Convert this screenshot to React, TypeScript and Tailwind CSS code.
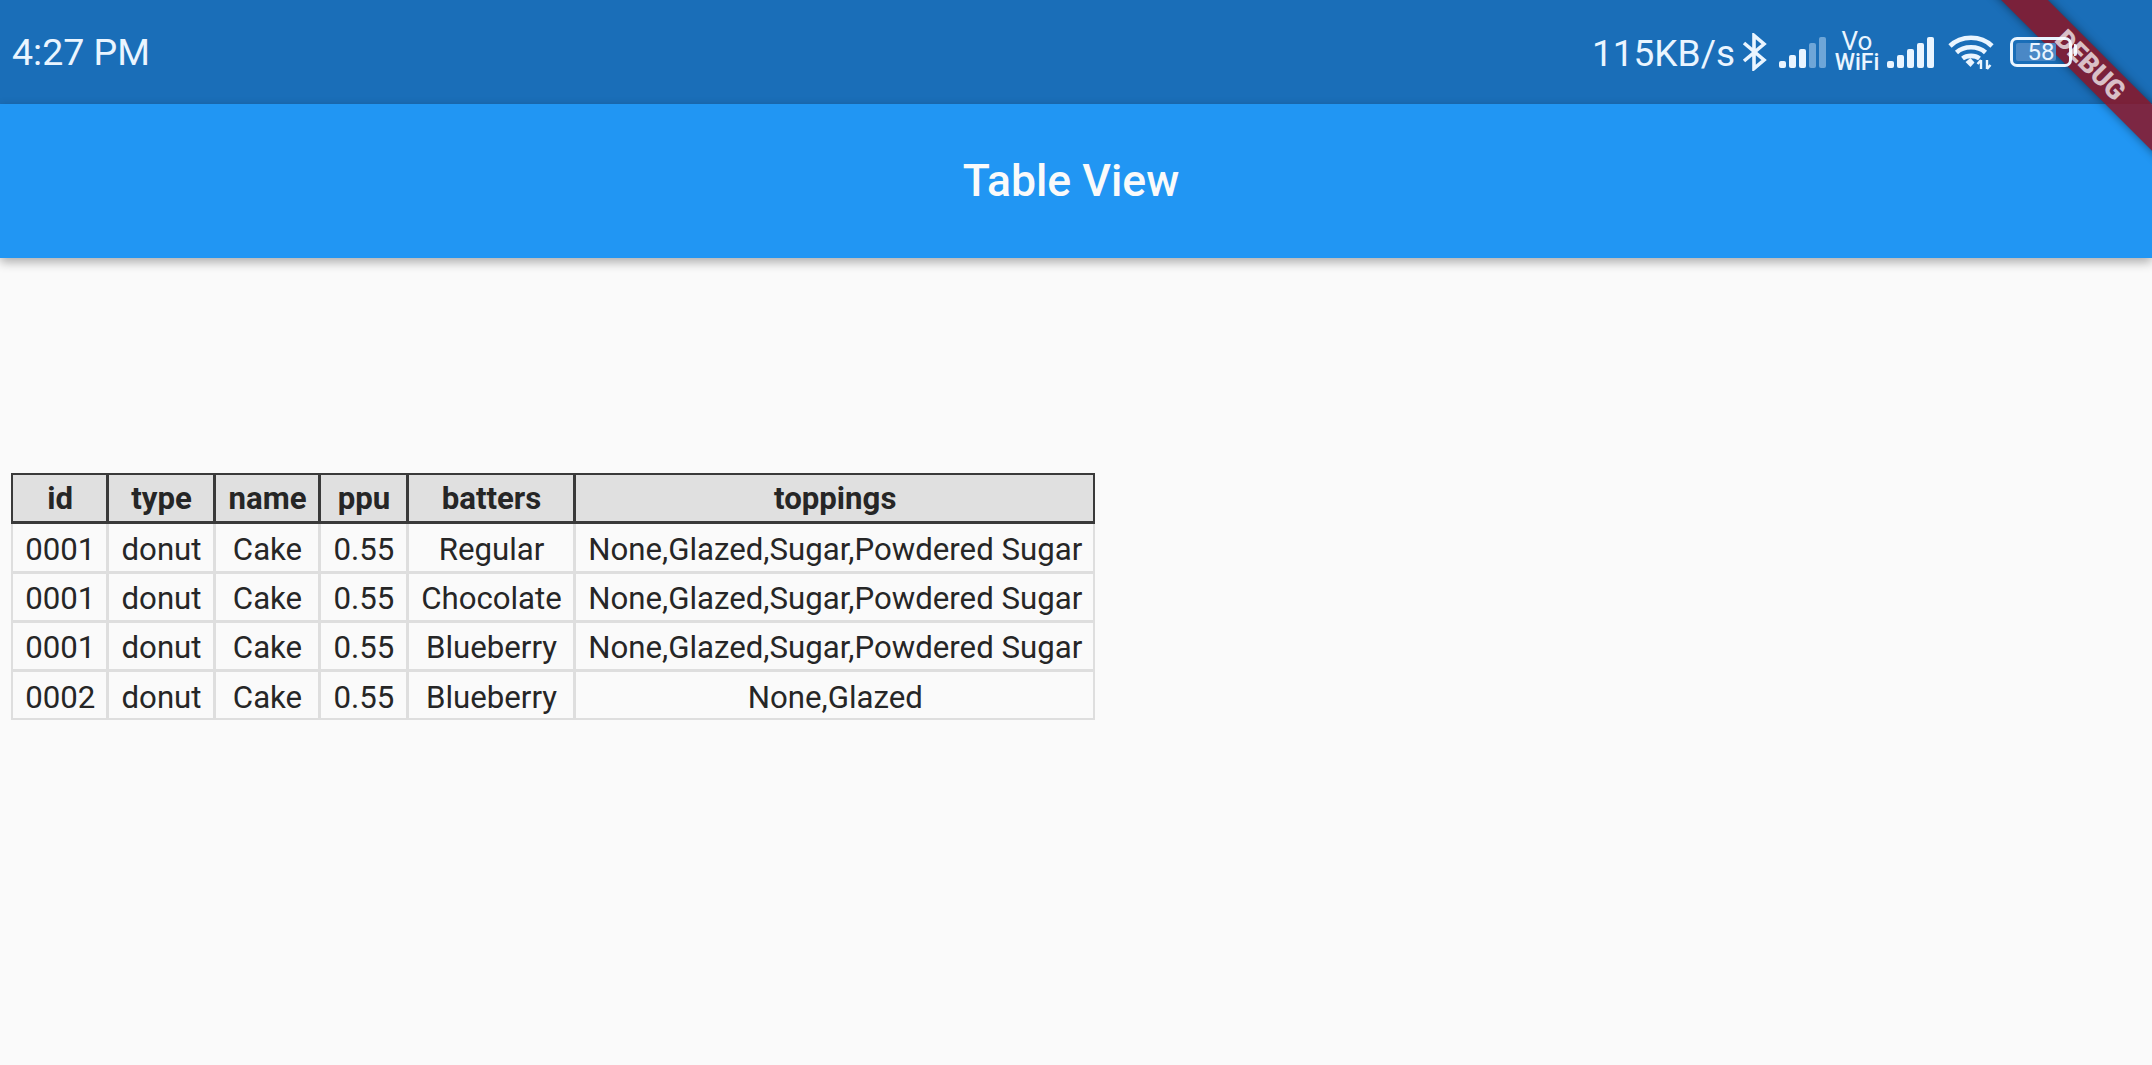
const rows = [
  ["0001", "donut", "Cake", "0.55", "Regular", "None,Glazed,Sugar,Powdered Sugar"],
  ["0001", "donut", "Cake", "0.55", "Chocolate", "None,Glazed,Sugar,Powdered Sugar"],
  ["0001", "donut", "Cake", "0.55", "Blueberry", "None,Glazed,Sugar,Powdered Sugar"],
  ["0002", "donut", "Cake", "0.55", "Blueberry", "None,Glazed"],
];
const headers = ["id", "type", "name", "ppu", "batters", "toppings"];
const widths = ["w-[95px]", "w-[107px]", "w-[105px]", "w-[88px]", "w-[167px]", "w-[520px]"];

function Signal({ dim }: { dim?: boolean }) {
  const xs = [0, 10, 20, 30, 40];
  const hs = [7, 13, 19, 25, 31];
  return (
    <svg width="48" height="31" viewBox="0 0 48 31" className="block">
      {xs.map((x, i) => (
        <rect
          key={x}
          x={x}
          y={31 - hs[i]}
          width="7"
          height={hs[i]}
          rx="2"
          fill={dim && i >= 3 ? "#6ea6d8" : "#eaf5ff"}
        />
      ))}
    </svg>
  );
}

function Bluetooth() {
  return (
    <svg width="25" height="38" viewBox="0 0 25 38" className="block" fill="none" stroke="#eaf5ff" strokeWidth="3.6" strokeLinejoin="miter">
      <path d="M2 10 L22 27 L12 35.5 V2.5 L22 11 L2 28" />
    </svg>
  );
}

function Wifi() {
  return (
    <svg width="46" height="36" viewBox="0 0 46 36" className="block" fill="none" stroke="#eaf5ff" strokeWidth="4.6">
      <path d="M2 12 C13 1 33 1 44 12" />
      <path d="M8.5 18.5 C16 11.5 30 11.5 37.5 18.5" />
      <path d="M14.5 24.5 C19 21 27 21 31.5 24.5" />
      <path d="M17.5 28 L22.5 24 L26.5 28.5 L22.5 33 Z" fill="#eaf5ff" stroke="none" />
      <path d="M33 35 V26 M29.5 30 L33 26 M39 26 V35 M39 35 L42.5 31" strokeWidth="2.4" />
    </svg>
  );
}

export default function App() {
  return (
    <div className="relative min-h-[1065px] overflow-hidden bg-[#fafafa] font-['Roboto',sans-serif]">
      <header className="flex h-[104px] items-center justify-between bg-[#1a6eb8] pl-[12px] pr-[80px] text-[#eaf5ff]">
        <span className="pt-[2px] text-[37.5px] leading-none">4:27 PM</span>
        <div className="flex items-center">
          <span className="pt-[2px] text-[37px] leading-none">115KB/s</span>
          <div className="ml-[7px]"><Bluetooth /></div>
          <div className="ml-[12px]"><Signal dim /></div>
          <div className="ml-[8px] flex w-[44px] flex-col items-center text-[23px] font-medium leading-[21px]">
            <span className="text-[26px] font-normal">Vo</span>
            <span>WiFi</span>
          </div>
          <div className="ml-[8px]"><Signal /></div>
          <div className="ml-[13px]"><Wifi /></div>
          <div className="relative z-10 ml-[16px] flex h-[30px] w-[62px] items-center rounded-[7px] border-[3px] border-[#eaf5ff] p-[3px]">
            <div className="flex h-full w-[40px] items-center justify-center rounded-[2px] bg-[#4a88c6] pl-[10px] text-[24px] leading-none">58</div>
            <div className="absolute right-[-8px] top-[4px] h-[12px] w-[3px] rounded-r-[2px] bg-[#eaf5ff]" />
          </div>
        </div>
      </header>

      <nav className="flex h-[154px] items-center justify-center bg-[#2196f3] pr-[10px] shadow-[0_4px_10px_rgba(0,0,0,0.32)]">
        <h1 className="text-[44.5px] font-medium leading-none text-[#fafafa]">Table View</h1>
      </nav>

      <main className="pl-[11px] pt-[215px]">
        <table className="table-fixed border-collapse text-center text-[31.2px] text-[#262626]">
          <thead>
            <tr className="h-[48px]">
              {headers.map((h, i) => (
                <th key={h} className={`${widths[i]} border-[3px] border-t-2 border-[#3a3a3a] bg-[#e0e0e0] p-0 pl-[2px] pt-[2px] font-bold leading-none first:border-l-2 last:border-r-2`}>{h}</th>
              ))}
            </tr>
          </thead>
          <tbody>
            {rows.map((r, ri) => (
              <tr key={ri} className={ri === 0 ? "h-[50px]" : "h-[49px]"}>
                {r.map((c, ci) => (
                  <td key={ci} className={`border-[3px] border-[#dedede] p-0 pl-[2px] pt-[5px] leading-none first:border-l-2 last:border-r-2 ${ri === 3 ? "border-b-2" : ""}`}>{c}</td>
                ))}
              </tr>
            ))}
          </tbody>
        </table>
      </main>

      <div className="pointer-events-none absolute right-0 top-0 z-[5] h-[200px] w-[200px] overflow-hidden">
        <div className="absolute left-[8px] top-[49px] h-[33px] w-[260px] rotate-45 bg-[rgba(140,20,35,0.85)] shadow-[0_0_10px_rgba(0,0,0,0.45)]" />
      </div>
      <div className="pointer-events-none absolute right-0 top-0 z-20 h-[200px] w-[200px] overflow-hidden">
        <div className="absolute left-[8px] top-[49px] flex h-[33px] w-[260px] rotate-45 items-center justify-center">
          <span className="text-[27px] font-black leading-none text-[rgba(255,255,255,0.72)]">DEBUG</span>
        </div>
      </div>
    </div>
  );
}
